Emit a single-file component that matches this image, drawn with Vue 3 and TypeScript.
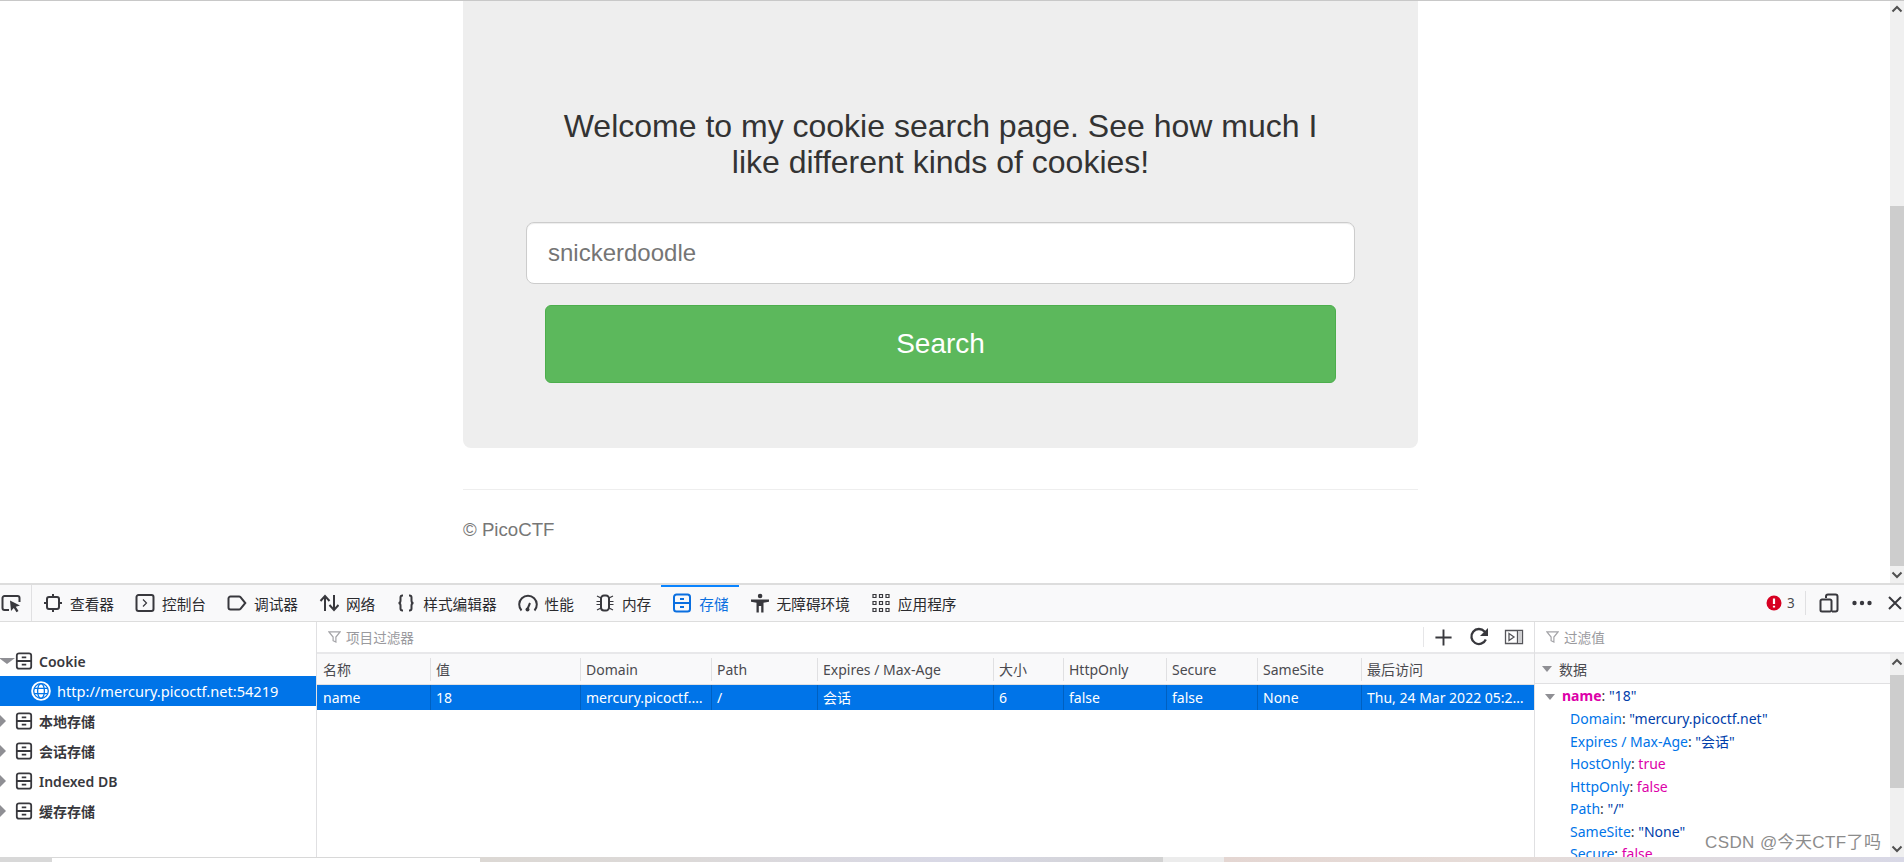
<script setup lang="ts">
type Tab = { id: string; label: string; active?: boolean };

const tabs: Tab[] = [
  { id: 'inspector', label: '查看器' },
  { id: 'console', label: '控制台' },
  { id: 'debugger', label: '调试器' },
  { id: 'network', label: '网络' },
  { id: 'style', label: '样式编辑器' },
  { id: 'perf', label: '性能' },
  { id: 'memory', label: '内存' },
  { id: 'storage', label: '存储', active: true },
  { id: 'a11y', label: '无障碍环境' },
  { id: 'apps', label: '应用程序' },
];

const stroked: Record<string, string> = {
  inspector: 'M6 4h8a2 2 0 0 1 2 2v8a2 2 0 0 1-2 2H6a2 2 0 0 1-2-2V6a2 2 0 0 1 2-2zM10 1v3M10 16v3M1 10h3M16 10h3',
  console: 'M3.5 2h13a2 2 0 0 1 2 2v12a2 2 0 0 1-2 2h-13a2 2 0 0 1-2-2V4a2 2 0 0 1 2-2z',
  debugger: 'M3.5 3.5h8.5a2 2 0 0 1 1.5.7l4.8 5.8-4.8 5.8a2 2 0 0 1-1.5.7H3.5a2 2 0 0 1-2-2v-9a2 2 0 0 1 2-2z',
  network: 'M6 18V3M1.5 8L6 3l4.5 5M15 2v15M10.5 12l4.500 5 4.500-5',
  style: 'M7 2.500H6.500c-1.500 0-2 .8-2 2v3c0 1.200-.8 2.500-2 2.500 1.200 0 2 1.300 2 2.500v3c0 1.200.5 2 2 2H7M13 2.500h.5c1.500 0 2 .8 2 2v3c0 1.200.8 2.500 2 2.500-1.200 0-2 1.300-2 2.500v3c0 1.200-.5 2-2 2H13',
  perf: 'M3.500 17.500A8.800 8.800 0 1 1 16.500 17.500M9.500 16l2.500-6',
  memory: 'M9 2.500h2a3 3 0 0 1 3 3v9a3 3 0 0 1-3 3H9a3 3 0 0 1-3-3v-9a3 3 0 0 1 3-3z',
  storage: 'M4.500 1.500h11a2.500 2.500 0 0 1 2.500 2.500v12a2.500 2.500 0 0 1-2.500 2.500h-11A2.500 2.500 0 0 1 2 16V4a2.500 2.500 0 0 1 2.500-2.500zM2 10h16M8 6h4M8 14h4',
};

const thin: Record<string, string> = {
  console: 'M8 6.500l3.500 3.500L8 13.500',
  memory: 'M6 5L2 3M6 8.500H1.500M6 11.500H1.500M6 15l-4 2M14 5l4-2M14 8.500h4.500M14 11.500h4.500M14 15l4 2',
  apps: 'M2 1.500h3v3H2zM8.500 1.500h3v3h-3zM15 1.500h3v3h-3zM2 8.500h3v3H2zM8.500 8.500h3v3h-3zM15 8.500h3v3h-3zM2 15.500h3v3H2zM8.500 15.500h3v3h-3zM15 15.500h3v3h-3z',
};

const filled: Record<string, string> = {
  perf: 'M7.500 16.500a2 2 0 1 0 4 0a2 2 0 1 0-4 0z',
  a11y: 'M7.800 3a2.300 2.300 0 1 0 4.600 0a2.300 2.300 0 1 0-4.600 0zM1 6.500h18v2.200l-5.500 1V19.500h-2.300v-6.500H8.800v6.500H6.500V9.700L1 8.700z',
};

const storeItems = [
  { label: 'Cookie', open: true },
  { label: 'http://mercury.picoctf.net:54219', host: true },
  { label: '本地存储' },
  { label: '会话存储' },
  { label: 'Indexed DB' },
  { label: '缓存存储' },
];

const headers = ['名称', '值', 'Domain', 'Path', 'Expires / Max-Age', '大小', 'HttpOnly', 'Secure', 'SameSite', '最后访问'];
const cells = ['name', '18', 'mercury.picoctf.net', '/', '会话', '6', 'false', 'false', 'None', 'Thu, 24 Mar 2022 05:20:18 GMT'];

const props = [
  { key: 'Domain', value: '"mercury.picoctf.net"', kind: 'str' },
  { key: 'Expires / Max-Age', value: '"会话"', kind: 'str' },
  { key: 'HostOnly', value: 'true', kind: 'bool' },
  { key: 'HttpOnly', value: 'false', kind: 'bool' },
  { key: 'Path', value: '"/"', kind: 'str' },
  { key: 'SameSite', value: '"None"', kind: 'str' },
  { key: 'Secure', value: 'false', kind: 'bool' },
];
</script>

<template>
  <div class="screen">
    <div class="page">
      <main class="site">
        <section class="card">
          <h3 class="title">Welcome to my cookie search page. See how much I like different kinds of cookies!</h3>
          <input class="field" type="text" placeholder="snickerdoodle" />
          <button class="search" type="button">Search</button>
        </section>
        <footer class="foot">© PicoCTF</footer>
      </main>
      <div class="vbar">
        <svg class="arrow" viewBox="0 0 14 14"><path d="M2.500 9L7 4.500 11.500 9" /></svg>
        <div class="vtrack page-track"><div class="vthumb page-thumb"></div></div>
        <svg class="arrow" viewBox="0 0 14 14"><path d="M2.500 5L7 9.500 11.500 5" /></svg>
      </div>
    </div>

    <div class="devtools">
      <nav class="toolbar">
        <button class="picker" type="button" aria-label="picker">
          <svg class="ico" viewBox="0 0 20 20">
            <path class="s" d="M8 17H3.500a2 2 0 0 1-2-2V5a2 2 0 0 1 2-2h13a2 2 0 0 1 2 2v4" />
            <path class="f" d="M9 7.500l10 5-4.200 1.200 2.700 4.300-2 1.200-2.700-4.300-2.800 3z" />
          </svg>
        </button>
        <div v-for="t in tabs" :key="t.id" class="tab" :class="{ active: t.active }">
          <svg class="ico" viewBox="0 0 20 20">
            <path v-if="stroked[t.id]" class="s" :d="stroked[t.id]" />
            <path v-if="thin[t.id]" class="t" :d="thin[t.id]" />
            <path v-if="filled[t.id]" class="f" :d="filled[t.id]" />
          </svg>
          <span>{{ t.label }}</span>
        </div>
        <div class="tools">
          <svg class="err" viewBox="0 0 16 16">
            <circle cx="8" cy="8" r="7.500" fill="#d70022" />
            <path d="M8 3.500v5.500M8 10.800v1.800" stroke="#fff" stroke-width="2.200" fill="none" />
          </svg>
          <span class="count">3</span>
          <i class="sep"></i>
          <svg class="ico resp" viewBox="0 0 20 20">
            <path class="s" d="M7 5V3.500a2 2 0 0 1 2-2h7.500a2 2 0 0 1 2 2v13a2 2 0 0 1-2 2H13" />
            <path class="s" d="M3 6.500h8a1.500 1.500 0 0 1 1.500 1.500v9a1.500 1.500 0 0 1-1.500 1.500H3A1.500 1.500 0 0 1 1.500 17V8A1.500 1.500 0 0 1 3 6.500z" />
          </svg>
          <svg class="ico dots" viewBox="0 0 20 20">
            <circle class="f" cx="2.500" cy="10" r="2.200" /><circle class="f" cx="10" cy="10" r="2.200" /><circle class="f" cx="17.500" cy="10" r="2.200" />
          </svg>
          <svg class="close" viewBox="0 0 14 14"><path class="s" d="M1 1l12 12M13 1L1 13" /></svg>
        </div>
      </nav>

      <div class="panes">
        <aside class="tree">
          <div v-for="item in storeItems" :key="item.label" class="node" :class="{ host: item.host, open: item.open }">
            <template v-if="item.host">
              <svg class="globe" viewBox="0 0 20 20">
                <circle cx="10" cy="10" r="9.800" fill="#fff" />
                <g fill="none" stroke="#0074e8" stroke-width="1.300">
                  <circle cx="10" cy="10" r="7.300" />
                  <ellipse cx="10" cy="10" rx="3.400" ry="7.300" />
                  <path d="M3.300 7.300h13.400M3.300 12.700h13.400" />
                </g>
              </svg>
            </template>
            <template v-else>
              <i class="twisty"></i>
              <svg class="cab" viewBox="0 0 20 20">
                <path class="s" d="M4.500 1.500h11a2.500 2.500 0 0 1 2.500 2.500v12a2.500 2.500 0 0 1-2.500 2.500h-11A2.500 2.500 0 0 1 2 16V4a2.500 2.500 0 0 1 2.500-2.500zM2 10h16M7.500 6h5M7.500 14h5" />
              </svg>
            </template>
            <span>{{ item.label }}</span>
          </div>
        </aside>

        <section class="table-pane">
          <div class="filterbar">
            <svg class="funnel" viewBox="0 0 14 14"><path d="M1 1.500h12L8.500 7v5.500l-3-1.500V7z" /></svg>
            <span class="ph grow">项目过滤器</span>
            <i class="sep small"></i>
            <svg class="ico plus" viewBox="0 0 20 20"><path class="s" d="M10 1.500v17M1.500 10h17" /></svg>
            <svg class="ico reload" viewBox="0 0 20 20">
              <path class="s wide" d="M16.800 12.500A7.500 7.500 0 1 1 15.500 4.500L18 7" />
              <path class="f" d="M19 1v8h-8z" />
            </svg>
            <svg class="ico side" viewBox="0 0 20 20">
              <path class="t gray" d="M1.500 3.500h17v13h-17zM13.500 3.500v13" />
              <path class="t gray" d="M5 6.500l5 3.500-5 3.500z" />
              <path class="f gray-f" d="M14 4h4v12h-4z" />
            </svg>
          </div>
          <div class="grid head">
            <div v-for="h in headers" :key="h" class="cell">{{ h }}</div>
          </div>
          <div class="grid row">
            <div v-for="c in cells" :key="c" class="cell">{{ c }}</div>
          </div>
        </section>

        <aside class="detail">
          <div class="filterbar detail-filter">
            <svg class="funnel" viewBox="0 0 14 14"><path d="M1 1.500h12L8.500 7v5.500l-3-1.500V7z" /></svg>
            <span class="ph">过滤值</span>
          </div>
          <div class="detail-body">
            <div class="detail-main">
              <div class="section"><i class="twisty down"></i>数据</div>
              <div class="prop top"><i class="twisty down"></i><b>name</b><span class="punct">: </span><span class="str">"18"</span></div>
              <div v-for="p in props" :key="p.key" class="prop">
                <span class="key">{{ p.key }}</span><span class="punct">: </span><span :class="p.kind">{{ p.value }}</span>
              </div>
            </div>
            <div class="vbar">
              <svg class="arrow" viewBox="0 0 14 14"><path d="M2.500 9L7 4.500 11.500 9" /></svg>
              <div class="vtrack detail-track"><div class="vthumb detail-thumb"></div></div>
              <svg class="arrow" viewBox="0 0 14 14"><path d="M2.500 5L7 9.500 11.500 5" /></svg>
            </div>
          </div>
        </aside>
      </div>
    </div>

    <div class="strip">
      <i class="s1"></i><i class="s2"></i><i class="s3"></i><i class="s4"></i><i class="s5"></i>
    </div>
    <div class="mark">CSDN @今天CTF了吗</div>
  </div>
</template>

<style>
html, body { margin: 0; overflow: hidden; background: #fff; }
</style>

<style scoped>
.screen {
  position: relative;
  width: 1904px;
  height: 862px;
  display: flex;
  flex-direction: column;
  overflow: hidden;
  font-family: "Noto Sans", "Noto Sans CJK SC", sans-serif;
  color: #38383d;
}

/* ---------- page ---------- */
.page {
  flex: none;
  height: 583px;
  box-sizing: border-box;
  border-top: 1px solid #c8c8c8;
  display: flex;
}
.site {
  flex: 1;
  padding-right: 9px;
  display: flex;
  flex-direction: column;
  align-items: center;
  font-family: "Liberation Sans", Arial, sans-serif;
}
.card {
  width: 955px;
  height: 447px;
  box-sizing: border-box;
  padding: 108px 63px 0;
  background: #eee;
  border-radius: 0 0 8px 8px;
  display: flex;
  flex-direction: column;
  align-items: center;
}
.title {
  margin: 0;
  width: 800px;
  font-size: 32px;
  line-height: 35.5px;
  font-weight: 400;
  text-align: center;
  color: #333;
}
.field {
  align-self: stretch;
  height: 62px;
  margin-top: 42px;
  box-sizing: border-box;
  padding: 0 21px;
  border: 1px solid #ccc;
  border-radius: 8px;
  background: #fff;
  box-shadow: inset 0 1px 1px rgba(0, 0, 0, .075);
  font: 24px "Liberation Sans", Arial, sans-serif;
  color: #555;
}
.field::placeholder { color: #757575; opacity: 1; }
.search {
  width: 791px;
  height: 78px;
  margin-top: 21px;
  border: 1px solid #4cae4c;
  border-radius: 6px;
  background: #5cb85c;
  color: #fff;
  font: 28px "Liberation Sans", Arial, sans-serif;
}
.foot {
  width: 955px;
  margin-top: 41px;
  padding-top: 29px;
  border-top: 1px solid #eee;
  font-size: 18.67px;
  line-height: 21px;
  color: #777;
}

/* ---------- scrollbars ---------- */
.vbar {
  flex: none;
  width: 14px;
  background: #f0f0f0;
  display: flex;
  flex-direction: column;
}
.arrow { width: 14px; height: 17px; flex: none; }
.arrow path { fill: none; stroke: #505050; stroke-width: 2; }
.vtrack { flex: 1; }
.vthumb { background: #cdcdcd; }
.page-track { padding-top: 188px; }
.page-thumb { height: 360px; }
.detail-track { padding-top: 4px; }
.detail-thumb { height: 113px; }

/* ---------- devtools toolbar ---------- */
.devtools {
  flex: 1;
  min-height: 0;
  display: flex;
  flex-direction: column;
}
.toolbar {
  flex: none;
  height: 36px;
  border-top: 2px solid #ddd;
  border-bottom: 1px solid #ddd;
  background: #f9f9fa;
  display: flex;
  align-items: stretch;
  font-size: 14.67px;
}
.ico { width: 20px; height: 20px; flex: none; display: block; }
.s { fill: none; stroke: #38383d; stroke-width: 2; }
.t { fill: none; stroke: #38383d; stroke-width: 1.200; }
.f { fill: #38383d; }
.picker {
  width: 32px;
  box-sizing: border-box;
  padding: 0 0 0 1px;
  border: 0;
  border-right: 1px solid #e0e0e2;
  background: none;
  background-clip: content-box;
  display: flex;
  align-items: center;
}
.tab {
  position: relative;
  display: flex;
  align-items: center;
  gap: 7px;
  padding: 0 10px 0 11px;
  white-space: nowrap;
  color: #2a2a2e;
}
.tab.active { color: #0a6fe0; }
.tab.active::before {
  content: "";
  position: absolute;
  left: 0;
  right: 0;
  top: 0;
  height: 2px;
  background: #0a84ff;
}
.tab.active .s { stroke: #0a6fe0; }
.tools {
  margin-left: auto;
  display: flex;
  align-items: center;
}
.err { width: 16px; height: 16px; display: block; }
.count { margin-left: 5px; width: 7px; font-size: 13.5px; color: #4a4a4f; }
.sep { width: 1px; height: 24px; margin-left: 11px; background: #e0e0e2; display: block; }
.resp { margin-left: 13px; }
.dots { margin-left: 13px; }
.close { width: 14px; height: 14px; margin: 0 2px 0 16px; display: block; }

/* ---------- panes ---------- */
.panes {
  flex: 1;
  min-height: 0;
  display: flex;
  font-size: 14px;
}
.tree {
  flex: none;
  width: 316px;
  padding-top: 24px;
  border-right: 1px solid #e0e0e2;
}
.node {
  position: relative;
  height: 30px;
  display: flex;
  align-items: center;
  padding-left: 15px;
  gap: 6px;
  font-weight: 600;
  font-size: 14px;
  color: #38383d;
}
.cab { width: 18px; height: 20px; flex: none; display: block; }
.twisty {
  display: block;
  width: 0;
  height: 0;
  border-style: solid;
  border-color: transparent transparent transparent #8f8f94;
  border-width: 6px 0 6px 6px;
}
.node .twisty { position: absolute; left: 0; top: 9px; }
.node.open .twisty {
  left: -1px;
  top: 12px;
  border-color: #8f8f94 transparent transparent;
  border-width: 6px 5px 0;
  border-left-width: 8px;
  border-right-width: 8px;
}
.node.host {
  background: #0074e8;
  color: #fff;
  padding-left: 31px;
  font-weight: 400;
  gap: 6px;
  font-size: 14.6px;
}
.globe { width: 20px; height: 20px; flex: none; display: block; }

.table-pane {
  flex: none;
  width: 1218px;
  box-sizing: border-box;
  border-right: 1px solid #e0e0e2;
}
.filterbar {
  height: 30px;
  border-bottom: 2px solid #e8e8ea;
  display: flex;
  align-items: center;
  padding-left: 11px;
}
.funnel { width: 13px; height: 14px; flex: none; margin-right: 5px; display: block; }
.funnel path { fill: none; stroke: #a4a4a8; stroke-width: 1.300; }
.ph { font-size: 13.6px; color: #9a9a9e; }
.grow { flex: 1; }
.sep.small { height: 20px; margin: 0 10px 0 0; background: #e6e6e8; }
.plus { width: 19px; height: 19px; }
.reload { margin-left: 16px; }
.wide { stroke-width: 2.300; }
.side { margin-left: 15px; margin-right: 10px; }
.t.gray { stroke: #55555a; stroke-width: 1.300; }
.f.gray-f { fill: #d0d0d2; }

.grid {
  display: grid;
  grid-template-columns: 113px 150px 131px 106px 176px 70px 103px 91px 104px 173px;
}
.cell {
  min-width: 0;
  padding: 0 6px;
  overflow: hidden;
  white-space: nowrap;
  text-overflow: ellipsis;
  box-sizing: border-box;
}
.head {
  height: 31px;
  background: #f9f9fa;
  border-bottom: 1px solid #e0e0e2;
  box-sizing: border-box;
  align-items: center;
  color: #4a4a4f;
}
.head .cell { height: 23px; line-height: 23px; border-left: 1px solid #e0e0e2; padding-left: 5px; }
.head .cell:first-child { border-left: 0; padding-left: 6px; }
.row {
  height: 25px;
  line-height: 25px;
  background: #0074e8;
  color: #fff;
}
.row .cell { border-left: 1px solid #0060c0; padding-left: 5px; }
.row .cell:first-child { border-left: 0; padding-left: 6px; }

.detail {
  flex: 1;
  min-width: 0;
  display: flex;
  flex-direction: column;
}
.detail-body { flex: 1; min-height: 0; display: flex; }
.detail-main { flex: 1; min-width: 0; overflow: hidden; }
.section {
  height: 30px;
  background: #f9f9fa;
  border-bottom: 1px solid #e0e0e2;
  box-sizing: border-box;
  padding-left: 7px;
  display: flex;
  align-items: center;
  color: #4a4a4f;
}
.twisty.down {
  border-color: #8f8f94 transparent transparent;
  border-width: 6px 5px 0;
  margin-right: 7px;
}
.prop {
  height: 22.500px;
  line-height: 22.500px;
  padding-left: 35px;
  white-space: nowrap;
  color: #0074e8;
}
.prop.top {
  display: flex;
  align-items: center;
  white-space: pre;
  padding-left: 10px;
  margin-top: 1px;
  height: 23px;
}
.prop.top .twisty.down { margin-right: 7px; }
.prop b { color: #dd00a9; font-weight: 700; }
.punct { color: #38383d; white-space: pre; }
.str { color: #003eaa; }
.bool { color: #dd00a9; }

/* ---------- bottom strip ---------- */
.strip { flex: none; height: 5px; display: flex; }
.strip i { display: block; height: 100%; }
.s1 { width: 52px; background: #d8d8d8; }
.s2 { width: 428px; background: #fff; border-top: 1px solid #d8d8d8; box-sizing: border-box; }
.s3 { width: 683px; background: linear-gradient(90deg, #dcd8d4, #dcd9d8 30%, #d8d8e6 70%, #d2d2d2); }
.s4 { width: 61px; background: #ececec; }
.s5 { flex: 1; background: linear-gradient(90deg, #e4d6d2, #e6dcd8 40%, #d8d8e6); }

.mark {
  position: absolute;
  left: 1705px;
  top: 832px;
  font-family: "Liberation Sans", "Noto Sans CJK SC", sans-serif;
  font-size: 17px;
  line-height: 22px;
  letter-spacing: .4px;
  white-space: nowrap;
  color: #8c8c8c;
  text-shadow: 0 0 2px #fff;
}
</style>
